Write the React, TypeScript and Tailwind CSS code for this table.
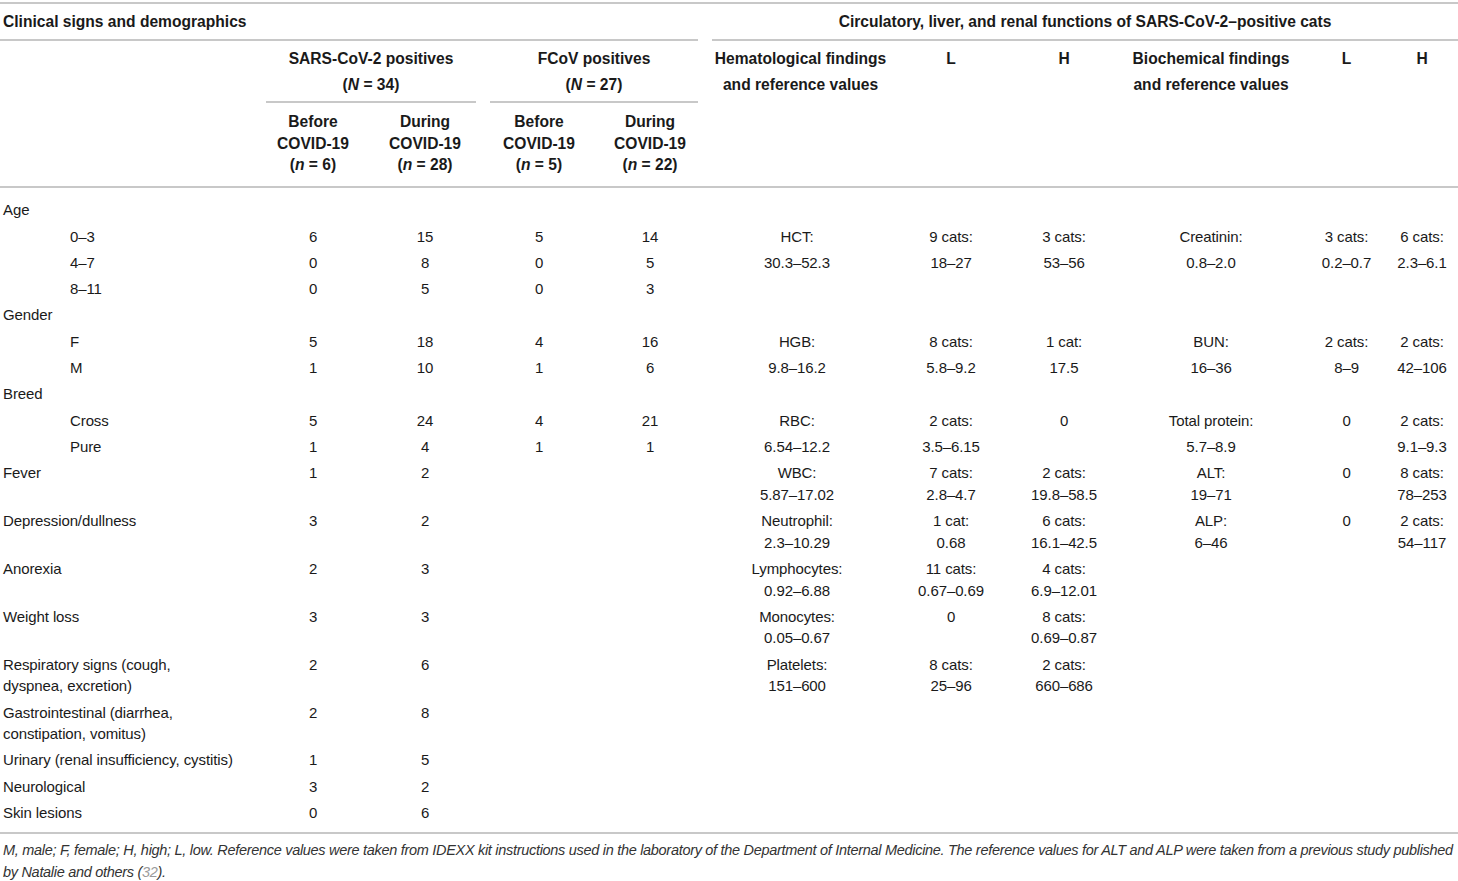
const rule = 'h-[2px] bg-[#c8c8c8]';

type Row = { label: string; indent?: boolean; cells: string[] };

const rows: Row[] = [
  { label: 'Age', cells: [] },
  { label: '0–3', indent: true, cells: ['6', '15', '5', '14', 'HCT:', '9 cats:', '3 cats:', 'Creatinin:', '3 cats:', '6 cats:'] },
  { label: '4–7', indent: true, cells: ['0', '8', '0', '5', '30.3–52.3', '18–27', '53–56', '0.8–2.0', '0.2–0.7', '2.3–6.1'] },
  { label: '8–11', indent: true, cells: ['0', '5', '0', '3'] },
  { label: 'Gender', cells: [] },
  { label: 'F', indent: true, cells: ['5', '18', '4', '16', 'HGB:', '8 cats:', '1 cat:', 'BUN:', '2 cats:', '2 cats:'] },
  { label: 'M', indent: true, cells: ['1', '10', '1', '6', '9.8–16.2', '5.8–9.2', '17.5', '16–36', '8–9', '42–106'] },
  { label: 'Breed', cells: [] },
  { label: 'Cross', indent: true, cells: ['5', '24', '4', '21', 'RBC:', '2 cats:', '0', 'Total protein:', '0', '2 cats:'] },
  { label: 'Pure', indent: true, cells: ['1', '4', '1', '1', '6.54–12.2', '3.5–6.15', '', '5.7–8.9', '', '9.1–9.3'] },
  { label: 'Fever', cells: ['1', '2', '', '', 'WBC:\n5.87–17.02', '7 cats:\n2.8–4.7', '2 cats:\n19.8–58.5', 'ALT:\n19–71', '0', '8 cats:\n78–253'] },
  { label: 'Depression/dullness', cells: ['3', '2', '', '', 'Neutrophil:\n2.3–10.29', '1 cat:\n0.68', '6 cats:\n16.1–42.5', 'ALP:\n6–46', '0', '2 cats:\n54–117'] },
  { label: 'Anorexia', cells: ['2', '3', '', '', 'Lymphocytes:\n0.92–6.88', '11 cats:\n0.67–0.69', '4 cats:\n6.9–12.01'] },
  { label: 'Weight loss', cells: ['3', '3', '', '', 'Monocytes:\n0.05–0.67', '0', '8 cats:\n0.69–0.87'] },
  { label: 'Respiratory signs (cough,\ndyspnea, excretion)', cells: ['2', '6', '', '', 'Platelets:\n151–600', '8 cats:\n25–96', '2 cats:\n660–686'] },
  { label: 'Gastrointestinal (diarrhea,\nconstipation, vomitus)', cells: ['2', '8'] },
  { label: 'Urinary (renal insufficiency, cystitis)', cells: ['1', '5'] },
  { label: 'Neurological', cells: ['3', '2'] },
  { label: 'Skin lesions', cells: ['0', '6'] },
];

const SubHead = ({ when, n }: { when: string; n: string }) => (
  <th className="align-top pt-[8px] pb-[10.5px] leading-[21.5px] font-bold text-center">
    {when}
    <br />
    COVID-19
    <br />
    (<i>n</i> = {n})
  </th>
);

const App = () => {
  return (
    <div className="w-[1458px] bg-white text-[#1a1a1a] text-[15px] tracking-[-0.1px] font-[Liberation_Sans,Arial,sans-serif]">
      <div className={`mt-[2px] ${rule}`} />
      <table className="table-fixed w-[1458px] border-collapse">
        <colgroup>
          <col className="w-[259px]" />
          <col className="w-[108px]" />
          <col className="w-[116px]" />
          <col className="w-[112px]" />
          <col className="w-[110px]" />
          <col className="w-[184px]" />
          <col className="w-[124px]" />
          <col className="w-[102px]" />
          <col className="w-[192px]" />
          <col className="w-[79px]" />
          <col className="w-[72px]" />
        </colgroup>
        <thead className="text-[15.6px] tracking-normal">
          <tr>
            <th colSpan={5} className="p-0 text-left font-bold">
              <div className="pl-[3px] pt-[7px] pb-[6px] leading-[22px]">Clinical signs and demographics</div>
              <div className={`mr-[7px] ${rule}`} />
            </th>
            <th colSpan={6} className="p-0 text-center font-bold">
              <div className="pl-[7px] pt-[7px] pb-[6px] leading-[22px]">
                Circulatory, liver, and renal functions of SARS-CoV-2–positive cats
              </div>
              <div className={`ml-[7px] ${rule}`} />
            </th>
          </tr>
          <tr>
            <th rowSpan={2} className="p-0" />
            <th colSpan={2} className="p-0 align-top font-bold text-center">
              <div className="pt-[5px] pb-[3px] leading-[26px]">
                SARS-CoV-2 positives
                <br />
                (<i>N</i> = 34)
              </div>
              <div className={`mx-[7px] ${rule}`} />
            </th>
            <th colSpan={2} className="p-0 align-top font-bold text-center">
              <div className="pt-[5px] pb-[3px] leading-[26px]">
                FCoV positives
                <br />
                (<i>N</i> = 27)
              </div>
              <div className={`mx-[7px] ${rule}`} />
            </th>
            <th rowSpan={2} className="align-top pt-[5px] pl-[7px] leading-[26px] font-bold text-center">
              Hematological findings
              <br />
              and reference values
            </th>
            <th rowSpan={2} className="align-top pt-[5px] leading-[26px] font-bold text-center">L</th>
            <th rowSpan={2} className="align-top pt-[5px] leading-[26px] font-bold text-center">H</th>
            <th rowSpan={2} className="align-top pt-[5px] leading-[26px] font-bold text-center">
              Biochemical findings
              <br />
              and reference values
            </th>
            <th rowSpan={2} className="align-top pt-[5px] leading-[26px] font-bold text-center">L</th>
            <th rowSpan={2} className="align-top pt-[5px] leading-[26px] font-bold text-center">H</th>
          </tr>
          <tr>
            <SubHead when="Before" n="6" />
            <SubHead when="During" n="28" />
            <SubHead when="Before" n="5" />
            <SubHead when="During" n="22" />
          </tr>
          <tr>
            <td colSpan={11} className="p-0">
              <div className={rule} />
            </td>
          </tr>
        </thead>
        <tbody>
          <tr>
            <td colSpan={11} className="p-0">
              <div className="h-[9px]" />
            </td>
          </tr>
          {rows.map((r, i) => (
            <tr key={i}>
              <td
                className={`align-top py-[2.35px] leading-[21.6px] text-left whitespace-pre-line ${
                  r.indent ? 'pl-[70px]' : 'pl-[3px]'
                }`}
              >
                {r.label}
              </td>
              {Array.from({ length: 10 }).map((_, j) => (
                <td key={j} className="align-top py-[2.35px] leading-[21.6px] text-center whitespace-pre-line">
                  {r.cells[j] ?? ''}
                </td>
              ))}
            </tr>
          ))}
          <tr>
            <td colSpan={11} className="p-0">
              <div className="h-[6px]" />
              <div className={rule} />
            </td>
          </tr>
        </tbody>
      </table>
      <div className="pl-[3px] pt-[5px] leading-[22px] italic text-[#333] text-[14.5px] tracking-[-0.3px]">
        <p className="whitespace-nowrap">
          M, male; F, female; H, high; L, low. Reference values were taken from IDEXX kit instructions used in the
          laboratory of the Department of Internal Medicine. The reference values for ALT and ALP were taken from a
          previous study published
        </p>
        <p>
          by Natalie and others (<span className="text-[#9a9a9a]">32</span>).
        </p>
      </div>
    </div>
  );
};

export default App;
